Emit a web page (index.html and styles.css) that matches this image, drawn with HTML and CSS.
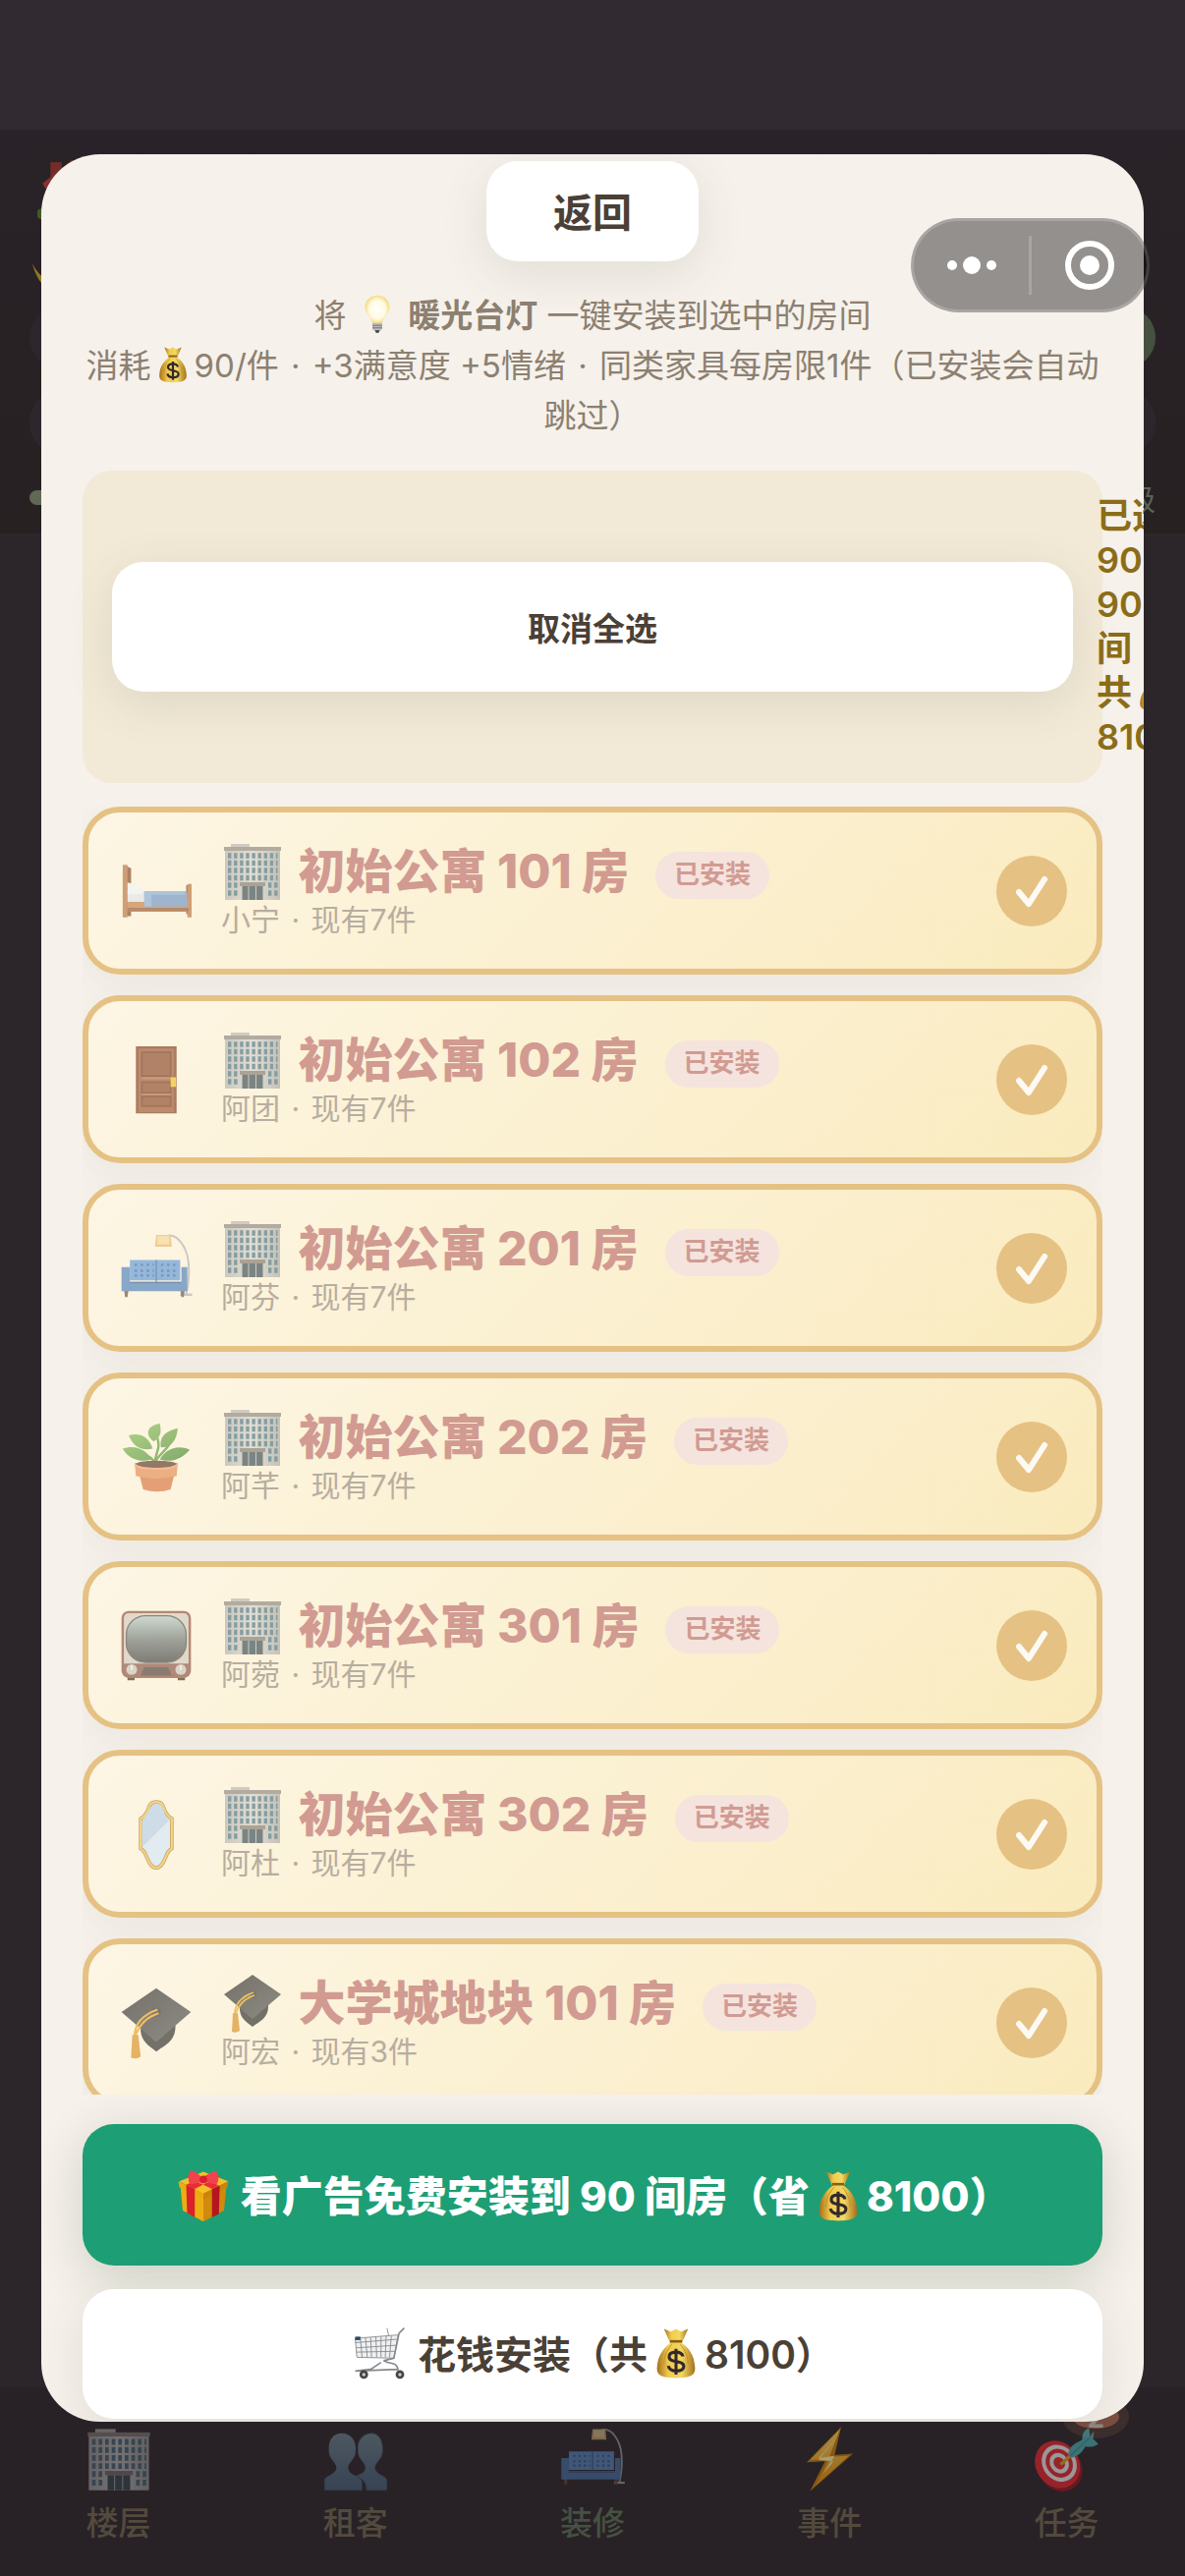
FILE: index.html
```html
<!DOCTYPE html>
<html lang="zh-CN">
<head>
<meta charset="utf-8">
<meta name="viewport" content="width=device-width, initial-scale=1">
<title>暖光台灯</title>
<link rel="stylesheet" href="styles.css">
</head>
<body>
<svg class="sprite" aria-hidden="true">
  <defs>
    <linearGradient id="g-wall" x1="0" y1="0" x2="1" y2="0"><stop offset="0" stop-color="#b3b1ad"/><stop offset=".5" stop-color="#d6d4d0"/><stop offset="1" stop-color="#a9a8a5"/></linearGradient>
    <linearGradient id="g-bag" x1="0" y1="0" x2="1" y2="0"><stop offset="0" stop-color="#a5701a"/><stop offset=".3" stop-color="#f0cb4e"/><stop offset=".65" stop-color="#f3d862"/><stop offset="1" stop-color="#a5701a"/></linearGradient>
    <radialGradient id="g-bulb" cx=".5" cy=".5" r=".55"><stop offset="0" stop-color="#fff"/><stop offset=".6" stop-color="#fffbe0"/><stop offset="1" stop-color="#f2d36c"/></radialGradient>
    <linearGradient id="g-people" x1="0" y1="0" x2="0" y2="1"><stop offset="0" stop-color="#7a99a6"/><stop offset="1" stop-color="#4b6c8c"/></linearGradient>
    <linearGradient id="g-screen" x1="0" y1="0" x2="0" y2="1"><stop offset="0" stop-color="#b9cccb"/><stop offset=".5" stop-color="#6f7977"/><stop offset="1" stop-color="#3c3d3c"/></linearGradient>
    <linearGradient id="g-cap" x1="0" y1="0" x2="1" y2="1"><stop offset="0" stop-color="#2b2b2b"/><stop offset="1" stop-color="#555"/></linearGradient>
    <linearGradient id="g-bolt" x1="0" y1="0" x2="0" y2="1"><stop offset="0" stop-color="#ffd75c"/><stop offset="1" stop-color="#e58a00"/></linearGradient>
    <linearGradient id="g-leaf" x1="0" y1="0" x2="1" y2="1"><stop offset="0" stop-color="#8cc256"/><stop offset="1" stop-color="#3f8330"/></linearGradient>
  </defs>
  <symbol id="building" viewBox="0 0 64 64">
    <path fill="#b9b6b2" d="M10 4h19v4H10z"/><path fill="url(#g-wall)" d="M4 10h56v51H4z"/><path fill="#8c857e" d="M3 7h58v4H3z"/>
    <g stroke="#477184" stroke-width="5.4" stroke-dasharray="3.4 2.7">
      <path d="M7 16h50.500M7 23.500h50.500M7 31h50.500M7 38.500h50.500M7 46h10M7 54h10M48 46h10M48 54h10"/>
    </g>
    <path fill="#807870" d="M19 43h26v4H19z"/><path fill="#354b54" d="M21.500 47h21v14h-21z"/><path stroke="#b9b6b2" stroke-width="1" d="M28 47v14M35.500 47v14"/>
  </symbol>
  <symbol id="bed" viewBox="0 7 64 64">
    <path fill="#83451f" d="M7 18l4 2v40H7zM57 34h4v24h-4z"/><path fill="#b8713f" d="M4 17h4v44H4zM58 33h3.500v28H58z"/>
    <path fill="#c27b46" d="M8 47h51v9H8z"/><path fill="#955125" d="M8 53h51v3H8z"/>
    <path fill="#dfe6ec" d="M8 40h16v8H8z"/><path fill="#f2f4f6" d="M8 32c4 0 14 4 14 7s-9 3-14 2z"/><path fill="#6d94c6" d="M22 39h34q2 0 2 2v11H22z"/><path fill="#86acd8" d="M22 39h6v13h-6zM28 39h28v3H28z"/>
  </symbol>
  <symbol id="door" viewBox="0 0 64 64">
    <path fill="#7b3b1d" d="M15 4h34v56H15z"/><path fill="#9b5230" d="M17 6h30v53H17z"/><path fill="#8a4626" stroke="#6c3015" stroke-width="1.200" d="M20 9h24v20H20zM20 34h24v9H20zM20 46h24v8H20z"/><path fill="#b46c43" d="M20 30h24v1.500H20zM20 43.500h24v1.500H20z"/><path fill="#f2c11d" d="M44 30h4.500v8H44z"/>
  </symbol>
  <symbol id="sofa" viewBox="0 0 64 64">
    <path fill="none" stroke="#aeb2b8" stroke-width="1.600" d="M40 5c10-3 18 10 19 23 1 12 0 18-2 26"/><path fill="#aeb2b8" d="M52 53h10v2H52z"/>
    <path fill="#e7b76a" d="M32 4h12l1 10H31z"/><path fill="#f8d99a" d="M33 5h10v7H33z"/>
    <path fill="#6f4a36" d="M5 49h4l-1 7H6zM52 49h4l-1 7h-2z"/><path fill="#5e97da" d="M10 25h22v17H10zM32 25h20v17H32z"/>
    <g stroke="#35649f" stroke-width="2" stroke-dasharray="2 3"><path d="M14 29h16M36 29h15M14 34h16M36 34h15M14 38h16M36 38h15"/></g>
    <path fill="#4b7fbd" d="M3 31h7v12h43V31h5v20H3z"/><path stroke="#315d93" d="M10 44h43M32 25v19"/>
  </symbol>
  <symbol id="plant" viewBox="0 0 64 64">
    <path fill="none" stroke="#5e963c" stroke-width="2" d="M31 38c0-12 5-11 2-22M31 37c-4-7-10-7-15-8M31 36c5-8 8-8 13-16"/>
    <path fill="url(#g-leaf)" d="M35 4c-12 2-12 10-5 15 7-5 6-9 5-15zM50 8c-13 3-15 9-14 16 9 0 13-6 14-16zM9 14c9-3 17 1 20 11-9 2-16-1-20-11zM4 25c8-3 19-1 24 9-9 3-19 0-24-9zM60 26c-9-4-19-2-25 8 9 3 18 0 25-8z"/>
    <path fill="#d9733f" d="M17 43h31l-4 16q-11 4-23 0z"/><path fill="#e58a54" d="M14 37h36l-1 11q-17 4-34 0z"/><ellipse cx="32" cy="38" rx="17" ry="3" fill="#5a3627"/><path fill="none" stroke="#f0a070" stroke-width="1.500" d="M14 38c4 5 32 5 36 0"/>
  </symbol>
  <symbol id="tv" viewBox="0 0 64 64">
    <path fill="#47271f" d="M8 57h6v4H8zM50 57h6v4h-6z"/><rect x="3" y="3" width="58" height="56" rx="6" fill="#8d4f3f"/><rect x="5" y="5" width="54" height="51" rx="4" fill="#d4cbbd"/><rect x="5" y="47" width="54" height="10" fill="#875044"/>
    <rect x="7" y="7" width="50" height="39" rx="16" fill="url(#g-screen)" stroke="#4b4a47"/><path fill="#4c3b35" d="M22 50h20l3 7H19z"/><circle cx="11.500" cy="52" r="4.500" fill="#c9c3b9"/><circle cx="52.500" cy="52" r="4.500" fill="#c9c3b9"/><path stroke="#fff" d="M11.500 48.500v4M52.500 48.500v4"/>
  </symbol>
  <symbol id="mirror" viewBox="0 0 64 64">
    <path fill="#d5e7f8" stroke="#a8752a" stroke-width="3" d="M32 5c5 0 6 3 7 7 2 4 4 6 6 7v25c-2 1-4 4-5 7-2 5-4 9-8 9s-6-4-8-9c-1-3-3-6-5-7V19c2-1 4-3 6-7 1-4 2-7 7-7z"/><path fill="#b5cfec" d="M27 10l-7 11v22L43 20c-4-3-4-7-6-11-2-4-8-3-10 1z"/><path fill="none" stroke="#f0c250" stroke-width="1.800" d="M32 5c5 0 6 3 7 7 2 4 4 6 6 7v25c-2 1-4 4-5 7-2 5-4 9-8 9s-6-4-8-9c-1-3-3-6-5-7V19c2-1 4-3 6-7 1-4 2-7 7-7z"/>
  </symbol>
  <symbol id="grad" viewBox="0 0 64 64">
    <path fill="#2b2b2b" d="M19 31v8c1 9 7 12 13 17 6-5 16-8 16-21v-6z"/><path fill="url(#g-cap)" d="M32 3l29 20-29 25L3 23z"/><circle cx="32" cy="23" r="4" fill="#333"/><path fill="none" stroke="#e8a322" stroke-width="1.800" d="M33 21C22 25 14 32 14 43M34 24C24 27 18 34 15 42"/><path fill="#d99025" d="M12 42h5l2 18q-4 3-8 1z"/>
  </symbol>
  <symbol id="bag" viewBox="0 0 64 64">
    <path fill="url(#g-bag)" d="M18 4l8 3 6-3 6 3 8-3-7 16H25z"/><path fill="#8c5c13" d="M25 17h14v4H25z"/><path fill="url(#g-bag)" d="M26 20h12c9 6 15 14 16 28 1 10-5 13-22 13S9 58 10 48c1-14 8-22 16-28z"/><path fill="none" stroke="#c08b25" d="M27 22c-6 8-9 14-9 23M37 22c6 8 9 14 9 23"/>
    <path fill="none" stroke="#33282c" stroke-width="3.500" d="M40 36c-1-4-4-5-8-5-5 0-8 2-8 5.500 0 8 17 3 17 11 0 4-4 5.500-9 5.500s-8-2-9-6M32 27v30"/>
  </symbol>
  <symbol id="bulb" viewBox="0 0 64 64">
    <path fill="url(#g-bulb)" d="M32 1c12 0 20 9 20 19 0 12-11 16-12 27H24C23 36 12 32 12 20 12 10 20 1 32 1z"/><path fill="#bdbcb9" d="M24 46h16v10l-4 3h-8l-4-3z"/><path stroke="#73716e" stroke-width="1.500" d="M24 50h16M24 54h16"/><path fill="#3d3c3b" d="M28 58h8l-2 4h-4z"/>
  </symbol>
  <symbol id="gift" viewBox="0 0 64 64">
    <path fill="#d18a0c" d="M32 32l27-14-3 31-24 13z"/><path fill="#edae14" d="M5 18l27 14v30L8 49z"/><path fill="#f6bf28" d="M4 15L32 4l29 11-29 15z"/><path fill="#eea910" d="M3 15l29 14v7L4 22z"/><path fill="#c9850b" d="M61 15L32 29v7l28-14z"/>
    <path fill="#d9202c" d="M12 19l10 5v33l-9-5z"/><path fill="#b5161f" d="M42 24l9-4-1 33-8 4z"/><path fill="#e72d36" d="M12 19l30-14 9 4-29 15zM13 10l29 14 8-4L22 7z"/>
    <path fill="#f2434c" d="M31 12C25 4 18 1 16 4c-2 4-2 10 0 14 5 1 12-1 15-4zM33 12c6-8 13-10 15-7 2 4 2 9 0 13-5 1-12-1-15-4z"/><circle cx="32" cy="13" r="4.500" fill="#d91f31"/>
  </symbol>
  <symbol id="cart" viewBox="0 0 64 64">
    <path fill="#dfe1e4" fill-opacity=".5" d="M4 15l50-4-5 27-43-1z"/><g fill="none" stroke="#85888c"><path d="M4 15l50-4-5 27-43-1zM4 20l49-4M5 26l47-3M5 31l46-1M10 15l2 22M16 14l2 23M22 14l1 23M28 13l1 24M34 13v24M40 12l-1 25M46 12l-2 25"/><path stroke-width="1.800" d="M61 3l-6 6-6 29-12 3M37 41c8 5 15 0 17 11M53 51L4 53l18-2 12-8"/><path d="M41 3l2 9"/></g>
    <path fill="#244967" d="M4 13h6v4H4z"/><circle cx="14" cy="57" r="5" fill="#444"/><circle cx="56" cy="57" r="5" fill="#444"/><circle cx="14" cy="57" r="2" fill="#ccc"/><circle cx="56" cy="57" r="2" fill="#ccc"/>
  </symbol>
  <symbol id="people" viewBox="0 0 64 64">
    <path fill="url(#g-people)" d="M19 8c8 0 13 6 13 14 0 3 0 5-1 7-2 5-6 7-6 11 0 8 13 7 13 14v7H3V52c0-5 11-5 11-12 0-4-4-6-6-11-1-2-1-4-1-7 0-8 4-14 12-14z"/><path fill="url(#g-people)" stroke="#40596b" stroke-width=".7" d="M47 8c-8 0-13 6-13 14 0 3 0 5 1 7 2 5 6 7 6 11 0 5-5 6-9 8 8 3 10 6 10 13h19V52c0-5-11-5-11-12 0-4 4-6 6-11 1-2 1-4 1-7 0-8-4-14-10-14z"/>
  </symbol>
  <symbol id="bolt" viewBox="0 0 64 64">
    <path fill="#c87906" d="M43 2L11 35l17-1-14 28 40-35-17 1z"/><path fill="url(#g-bolt)" d="M42 4L14 33l18-1-13 25 31-28-18 1z"/><path fill="#fff0a8" d="M38 13L22 31l15-2-11 17 10-12-14-1z"/>
  </symbol>
  <symbol id="target" viewBox="0 0 64 64">
    <ellipse cx="26" cy="40" rx="20" ry="23" fill="#96121a" transform="rotate(-35 26 40)"/><g transform="rotate(-35 24 37)"><ellipse cx="24" cy="37" rx="20" ry="23" fill="#e1242c"/><ellipse cx="26" cy="37" rx="15.500" ry="18" fill="#e7e5e2"/><ellipse cx="26" cy="37" rx="12" ry="14" fill="#e1242c"/><ellipse cx="26" cy="37" rx="8.500" ry="10" fill="#e7e5e2"/><ellipse cx="26" cy="37" rx="5" ry="6" fill="#e1242c"/></g>
    <path stroke="#d6a318" stroke-width="3" d="M27 37l10-9"/><path fill="#48a7aa" d="M34 26c3-8 8-9 13-12 0-6 2-9 6-11 1 3 1 5 1 8l4-5-1 7 5 5c-5 3-9 3-12 2-3 6-7 9-14 11z"/><path stroke="#2b8b91" d="M36 29l20-19"/>
  </symbol>
  <symbol id="house" viewBox="0 0 64 64">
    <path fill="#8d8068" d="M9 28h46v30H9z"/><path fill="#a09174" d="M10 30L33 8l22 22v4H10z"/><path fill="#a8352a" d="M13 5h11v20H13z"/><path fill="#c43c2e" d="M5 26L34 3l26 24-3 3L34 9 8 31z"/><ellipse cx="7" cy="56" rx="8" ry="6" fill="#547f22"/>
  </symbol>
  <symbol id="moon" viewBox="0 0 64 64"><path fill="#d6ad2b" d="M3 8c5 14 24 28 50 26-12 20-43 7-50-26z"/></symbol>
</svg>

<div class="app" aria-hidden="true">
  <div class="status"></div>
  <header class="header">
    <svg class="header-icon"><use href="#house"/></svg>
    <svg class="header-icon moon"><use href="#moon"/></svg>
    <div class="pill pill-accent"></div>
    <div class="pill"></div>
    <div class="level"><div class="level-bar"></div><span>级</span></div>
  </header>
  <main class="floor"></main>
  <nav class="tabs">
    <a class="tab" href="#floors"><svg class="tab-icon"><use href="#building"/></svg>楼层</a>
    <a class="tab" href="#tenants"><svg class="tab-icon"><use href="#people"/></svg>租客</a>
    <a class="tab active" href="#decor"><svg class="tab-icon"><use href="#sofa"/></svg>装修</a>
    <a class="tab" href="#events"><svg class="tab-icon vivid"><use href="#bolt"/></svg>事件</a>
    <a class="tab" href="#tasks"><span class="tab-badge">2</span><svg class="tab-icon vivid"><use href="#target"/></svg>任务</a>
  </nav>
</div>

<div class="overlay">
  <section class="dialog" role="dialog" aria-modal="true">
    <button class="btn back" type="button">返回</button>
    <p class="intro">将 <svg class="emoji e-s"><use href="#bulb"/></svg> <b>暖光台灯</b> 一键安装到选中的房间<br>消耗<svg class="emoji e-s"><use href="#bag"/></svg>90/件 <span class="dot">·</span> +3满意度 +5情绪 <span class="dot">·</span> 同类家具每房限1件（已安装会自动跳过）</p>
    <div class="picker">
      <button class="btn toggle" type="button">取消全选</button>
      <div class="summary"><span>已选</span><span>90</span><span>90</span><span>间</span><span>共<svg class="emoji e-s"><use href="#bag"/></svg></span><span>8100</span></div>
    </div>

    <div class="rooms">
      <label class="room"><svg class="room-icon"><use href="#bed"/></svg><span class="room-text"><span class="room-title"><svg class="emoji e-l"><use href="#building"/></svg> 初始公寓 101 房<span class="tag">已安装</span></span><span class="room-sub">小宁 <span class="dot">·</span> 现有7件</span></span><span class="check"><input type="checkbox" checked disabled><svg viewBox="0 0 72 72"><path d="M23 37l10 12 16-25"/></svg></span></label>
      <label class="room"><svg class="room-icon"><use href="#door"/></svg><span class="room-text"><span class="room-title"><svg class="emoji e-l"><use href="#building"/></svg> 初始公寓 102 房<span class="tag">已安装</span></span><span class="room-sub">阿团 <span class="dot">·</span> 现有7件</span></span><span class="check"><input type="checkbox" checked disabled><svg viewBox="0 0 72 72"><path d="M23 37l10 12 16-25"/></svg></span></label>
      <label class="room"><svg class="room-icon"><use href="#sofa"/></svg><span class="room-text"><span class="room-title"><svg class="emoji e-l"><use href="#building"/></svg> 初始公寓 201 房<span class="tag">已安装</span></span><span class="room-sub">阿芬 <span class="dot">·</span> 现有7件</span></span><span class="check"><input type="checkbox" checked disabled><svg viewBox="0 0 72 72"><path d="M23 37l10 12 16-25"/></svg></span></label>
      <label class="room"><svg class="room-icon"><use href="#plant"/></svg><span class="room-text"><span class="room-title"><svg class="emoji e-l"><use href="#building"/></svg> 初始公寓 202 房<span class="tag">已安装</span></span><span class="room-sub">阿芊 <span class="dot">·</span> 现有7件</span></span><span class="check"><input type="checkbox" checked disabled><svg viewBox="0 0 72 72"><path d="M23 37l10 12 16-25"/></svg></span></label>
      <label class="room"><svg class="room-icon"><use href="#tv"/></svg><span class="room-text"><span class="room-title"><svg class="emoji e-l"><use href="#building"/></svg> 初始公寓 301 房<span class="tag">已安装</span></span><span class="room-sub">阿菀 <span class="dot">·</span> 现有7件</span></span><span class="check"><input type="checkbox" checked disabled><svg viewBox="0 0 72 72"><path d="M23 37l10 12 16-25"/></svg></span></label>
      <label class="room"><svg class="room-icon"><use href="#mirror"/></svg><span class="room-text"><span class="room-title"><svg class="emoji e-l"><use href="#building"/></svg> 初始公寓 302 房<span class="tag">已安装</span></span><span class="room-sub">阿杜 <span class="dot">·</span> 现有7件</span></span><span class="check"><input type="checkbox" checked disabled><svg viewBox="0 0 72 72"><path d="M23 37l10 12 16-25"/></svg></span></label>
      <label class="room"><svg class="room-icon"><use href="#grad"/></svg><span class="room-text"><span class="room-title"><svg class="emoji e-l"><use href="#grad"/></svg> 大学城地块 101 房<span class="tag">已安装</span></span><span class="room-sub">阿宏 <span class="dot">·</span> 现有3件</span></span><span class="check"><input type="checkbox" checked disabled><svg viewBox="0 0 72 72"><path d="M23 37l10 12 16-25"/></svg></span></label>
    </div>

    <div class="actions">
      <button class="btn primary" type="button"><svg class="emoji e-m"><use href="#gift"/></svg> 看广告免费安装到 90 间房（省<svg class="emoji e-m"><use href="#bag"/></svg>8100）</button>
      <button class="btn pay" type="button"><svg class="emoji e-m"><use href="#cart"/></svg> 花钱安装（共<svg class="emoji e-m"><use href="#bag"/></svg>8100）</button>
    </div>
  </section>
</div>

<div class="capsule">
  <button type="button" aria-label="更多"><svg viewBox="0 0 60 60"><circle cx="10" cy="30" r="5"/><circle cx="30" cy="30" r="9"/><circle cx="50" cy="30" r="5"/></svg></button>
  <button type="button" aria-label="关闭"><svg viewBox="0 0 60 60"><circle cx="30" cy="30" r="10"/><circle class="ring" cx="30" cy="30" r="22"/></svg></button>
</div>
</body>
</html>
```
FILE: styles.css
```css
* { box-sizing: border-box; }

body {
  margin: 0;
  position: relative;
  background: #2c262a;
  color: #4a4036;
  font-family: Inter, "Noto Sans CJK SC", sans-serif;
}

svg { display: block; }
.sprite { position: absolute; width: 0; height: 0; }

/* Dimmed game screen behind the dialog */
.app {
  display: flex;
  flex-direction: column;
  height: 100vh;
}
.status { height: 132px; background: #312b31; }
.header {
  display: flex;
  flex-direction: column;
  height: 414px;
  padding: 24px 30px 0;
  background: linear-gradient(#292329, #272122);
  border-bottom: 3px solid #2e282c;
}
.header-icon { width: 66px; height: 66px; margin: 4px 0 0 8px; opacity: .6; }
.header-icon.moon { width: 60px; height: 60px; margin: 34px 0 0 0; }
.pill { height: 66px; margin-top: 22px; border-radius: 32px; background: #2d272d; }
.pill-accent {
  height: 63px;
  margin-top: -8px;
  background: linear-gradient(90deg, #2d272d 50%, #465040 50%);
}
.level {
  display: flex;
  align-items: center;
  justify-content: space-between;
  height: 42px;
  margin-top: 22px;
  color: #5b6355;
  font-size: 30px;
}
.level-bar { width: 60%; height: 15px; border-radius: 8px; background: #5f6956; }
.floor { flex: 1; }
.tabs {
  display: grid;
  grid-template-columns: repeat(5, 1fr);
  height: 192px;
  background: #282227;
}
.tab {
  position: relative;
  display: flex;
  flex-direction: column;
  align-items: center;
  padding-top: 38px;
  color: #534a3d;
  font-size: 33px;
  font-weight: 500;
  line-height: 60px;
  text-decoration: none;
}
.tab.active { color: #465141; }
.tab-icon { width: 70px; height: 70px; opacity: .45; }
.tab-icon.vivid { opacity: .6; }
.tab-badge {
  position: absolute;
  top: 8px;
  left: 50%;
  margin-left: -4px;
  width: 68px;
  height: 44px;
  border: 10px solid #3c2e2d;
  border-radius: 50%;
  background: #794e41;
  color: #8b857f;
  font-size: 28px;
  font-weight: 700;
  line-height: 26px;
  text-align: center;
}

/* Dialog */
.overlay {
  position: absolute;
  inset: 0;
  padding: 157px 42px;
}
.dialog {
  display: flex;
  flex-direction: column;
  height: 100%;
  padding: 7px 42px 3px;
  overflow: hidden;
  border-radius: 60px;
  background: #f6f1eb;
}

.btn {
  flex: none;
  border: 0;
  border-radius: 32px;
  background: #fff;
  box-shadow: 0 12px 48px rgba(70, 90, 60, .12);
  color: #4a4036;
  font-family: inherit;
  font-weight: 600;
}
.back {
  align-self: center;
  height: 102px;
  padding: 0 68px 2px;
  font-size: 40px;
}

.intro {
  margin: 30px 0;
  color: #8c8070;
  font-size: 33px;
  line-height: 51px;
  text-align: center;
}
.dot { margin: 0 3px; }

.emoji { display: inline-block; overflow: visible; }
.e-s { width: 44px; height: 40px; vertical-align: -7px; }
.e-m { width: 58px; height: 56px; vertical-align: -12px; }
.e-l { width: 64px; height: 64px; margin-right: 4px; }

.picker {
  display: flex;
  flex: none;
  align-items: center;
  gap: 24px;
  padding: 24px 30px;
  border-radius: 30px;
  background: #f2e9d7;
}
.toggle { flex: 0 0 100%; height: 132px; padding-bottom: 2px; font-size: 33px; }
.summary {
  flex: none;
  color: #8b6d17;
  font-size: 36px;
  font-weight: 600;
  line-height: 45px;
  white-space: nowrap;
}
.summary span { display: block; height: 45px; }

.rooms {
  display: flex;
  flex: 1 1 0;
  flex-direction: column;
  gap: 21px;
  min-height: 0;
  margin: 24px 0 30px;
  overflow: hidden;
}
.room {
  display: flex;
  flex: none;
  align-items: center;
  gap: 27px;
  padding: 30px;
  border: 6px solid #e5c283;
  border-radius: 38px;
  background: linear-gradient(135deg, #fdf6e5, #fbf1d3 45%, #fbeecb 70%, #faebbd) padding-box;
  box-shadow: 0 12px 36px rgba(80, 110, 70, .06);
}
.room-icon { width: 78px; height: 78px; opacity: .65; }
.room-text { display: flex; flex: 1; flex-direction: column; }
.room-title {
  display: flex;
  align-items: center;
  height: 60px;
  color: #d19b92;
  font-size: 48px;
  font-weight: 800;
  line-height: 60px;
  white-space: pre;
}
.room-title .emoji { opacity: .65; }
.tag {
  height: 48px;
  margin: 8px 0 0 27px;
  padding: 0 19px;
  border-radius: 24px;
  background: #f5e3de;
  font-size: 26px;
  font-weight: 600;
  line-height: 46px;
}
.room-sub { color: #b8ad9f; font-size: 30px; line-height: 39px; }

.check { display: grid; width: 72px; height: 72px; }
.check input {
  grid-area: 1 / 1;
  appearance: none;
  width: 72px;
  height: 72px;
  margin: 0;
  border-radius: 50%;
  background: #e5c283;
}
.check svg {
  grid-area: 1 / 1;
  position: relative;
  fill: none;
  stroke: #fdfaf4;
  stroke-width: 6;
  stroke-linecap: round;
  stroke-linejoin: round;
}

.actions { display: flex; flex: none; flex-direction: column; gap: 24px; }
.primary {
  height: 144px;
  padding-bottom: 4px;
  background: #1e9e75;
  box-shadow: 0 12px 48px rgba(50, 80, 50, .2);
  color: #fff;
  font-size: 42px;
  font-weight: 800;
}
.pay { height: 132px; padding-bottom: 4px; font-size: 39px; }

/* Host app capsule, floating above everything */
.capsule {
  position: absolute;
  top: 222px;
  right: 36px;
  display: flex;
  align-items: center;
  width: 243px;
  height: 96px;
  border: 3px solid rgba(255, 255, 255, .18);
  border-radius: 48px;
  background: rgba(0, 0, 0, .4);
}
.capsule button {
  display: grid;
  flex: 1;
  place-items: center;
  height: 60px;
  padding: 0;
  border: 0;
  background: none;
}
.capsule button + button { border-left: 3px solid rgba(255, 255, 255, .2); }
.capsule svg { width: 60px; height: 60px; fill: #fff; }
.capsule .ring { fill: none; stroke: #fff; stroke-width: 6; }
```
